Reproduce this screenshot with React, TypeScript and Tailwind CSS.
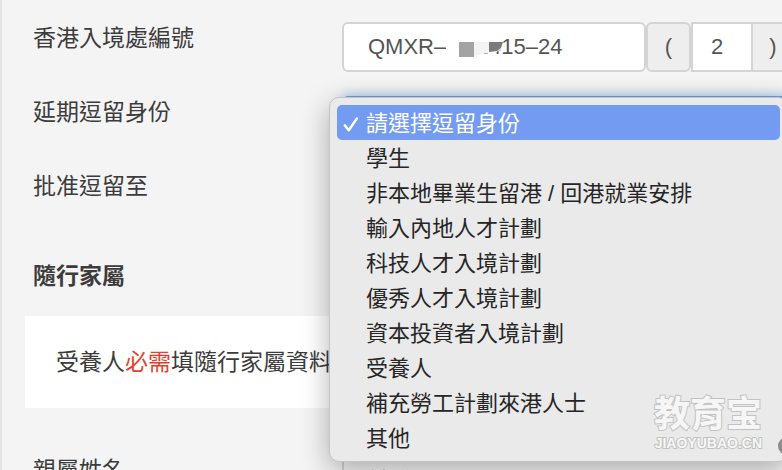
import React, { useState } from 'react';
import { clsx } from 'clsx';

const OPTIONS = [
  '請選擇逗留身份',
  '學生',
  '非本地畢業生留港 / 回港就業安排',
  '輸入內地人才計劃',
  '科技人才入境計劃',
  '優秀人才入境計劃',
  '資本投資者入境計劃',
  '受養人',
  '補充勞工計劃來港人士',
  '其他',
];

const CheckMark = () => (
  <svg width="16" height="16" viewBox="0 0 16 16" fill="none" aria-hidden="true">
    <path d="M1.8 9.4 5.8 14.2 13.8 2.6" stroke="currentColor" strokeWidth="2.5" strokeLinecap="round" strokeLinejoin="round" />
  </svg>
);

// Mosaic that hides the middle digits of the file number
const Redaction = () => (
  <svg
    className="absolute left-[100px] top-[14px] pointer-events-none"
    width="64"
    height="26"
    viewBox="0 0 64 26"
    aria-hidden="true"
  >
    <path d="M4 2H60V13L54 16 46 17V22H4Z" fill="#fff" />
    <rect x="17" y="6" width="15" height="15" fill="#a3a3a3" />
    <path d="M32 6H47V16L32 20Z" fill="#f3f3f3" />
    <path d="M47 6H61L59 12 55 15 47 16Z" fill="#7b7b7b" />
    <rect x="42" y="17" width="4" height="1" fill="#b0b0b0" />
  </svg>
);

const Watermark = () => (
  <div className="absolute right-[25px] bottom-[9px] flex flex-col items-end text-[#f6f6f6] pointer-events-none">
    <span className="text-[36px] leading-[38px] font-bold [-webkit-text-stroke:2px_#c2c2c2] [paint-order:stroke_fill]">
      教育宝
    </span>
    <span className="text-[14px] leading-[18px] font-bold [-webkit-text-stroke:2px_#c2c2c2] [paint-order:stroke_fill]">
      JIAOYUBAO.CN
    </span>
  </div>
);

const App = () => {
  const [selected, setSelected] = useState(0);

  return (
    <div className="relative h-screen overflow-hidden bg-[#f4f4f4] border-l-2 border-[#e4e4e4] text-[#3c3c3c] text-[23px] leading-[32px] font-['Liberation_Sans','Noto_Sans_CJK_TC',sans-serif]">
      <form className="pt-[22px] pl-[31px]">
        <div className="flex flex-col gap-6">
          <div className="flex items-start h-[50px]">
            <label htmlFor="fileNo" className="w-[309px] shrink-0">香港入境處編號</label>
            <div className="flex flex-1 -mr-[13px] text-[#555] text-[22px]">
              <div className="relative flex-1 min-w-0">
                <input
                  id="fileNo"
                  defaultValue="QMXR–       415–24"
                  className="w-full h-[50px] pl-6 bg-white border-2 border-[#d4d4d4] rounded-md outline-none whitespace-pre"
                />
                <Redaction />
              </div>
              <span className="w-[45px] h-[50px] flex items-center justify-center bg-[#eee] border-2 border-[#d4d4d4] rounded-md">(</span>
              <input
                aria-label="檢查數位"
                defaultValue="2"
                className="w-[60px] h-[50px] pl-[18px] bg-white border-y-2 border-l-2 border-[#d4d4d4] outline-none"
              />
              <span className="w-[44px] h-[50px] flex items-center justify-center bg-[#eee] border-2 border-[#d4d4d4] rounded-r-md">)</span>
            </div>
          </div>

          <div className="flex items-start h-[50px]">
            <label htmlFor="status" className="w-[309px] shrink-0">延期逗留身份</label>
            <div className="relative flex-1 -mr-[13px]">
              <select
                id="status"
                value={selected}
                onChange={(e) => setSelected(Number(e.target.value))}
                className="w-full h-[50px] bg-white border-2 border-[#6f9fd8] rounded-md outline-none shadow-[0_0_12px_rgba(102,160,233,0.6)]"
              >
                {OPTIONS.map((option, idx) => (
                  <option key={option} value={idx}>{option}</option>
                ))}
              </select>

              {/* Open menu */}
              <ul
                role="listbox"
                aria-label="延期逗留身份"
                className="absolute z-10 top-px -left-[13px] right-[7px] px-[7px] pt-[7px] pb-[6px] bg-[#eaeaea] border border-[#c4c4c4] rounded-[10px] shadow-[0_8px_28px_rgba(0,0,0,0.3)] text-[#262626] text-[22px]"
              >
                {OPTIONS.map((option, idx) => (
                  <li key={option} role="option" aria-selected={idx === selected}>
                    <button
                      type="button"
                      onClick={() => setSelected(idx)}
                      className={clsx(
                        'flex items-center w-full h-[35px] pt-[2px] pl-[6px] rounded-[5px] text-left whitespace-nowrap',
                        idx === selected && 'bg-[#739bf2] text-white',
                      )}
                    >
                      <span className="w-[23px] shrink-0">{idx === selected && <CheckMark />}</span>
                      {option}
                    </button>
                  </li>
                ))}
                <Watermark />
              </ul>
            </div>
          </div>

          <div className="flex items-start h-[50px]">
            <label htmlFor="until" className="w-[309px] shrink-0">批准逗留至</label>
            <input id="until" className="flex-1 h-[50px] bg-white border-2 border-[#d4d4d4] rounded-md" />
          </div>
        </div>

        <h2 className="mt-10 font-bold">隨行家屬</h2>

        <p className="mt-6 -ml-2 h-[92px] pl-[31px] flex items-center bg-white whitespace-nowrap">
          受養人<span className="text-[#e5402d]">必需</span>填隨行家屬資料
        </p>

        <div className="mt-[46px] flex items-start">
          <label htmlFor="relative" className="w-[309px] shrink-0">親屬姓名</label>
          <input
            id="relative"
            placeholder="姓氏"
            className="flex-1 h-[54px] -mr-[13px] pl-6 bg-[#f4f4f4] border-2 border-[#d4d4d4] rounded-md text-[22px]"
          />
        </div>
      </form>

      <span className="absolute z-20 -right-[14px] bottom-[15px] size-[18px] rounded-full bg-[#8c8c8c]" />
    </div>
  );
};

export default App;
